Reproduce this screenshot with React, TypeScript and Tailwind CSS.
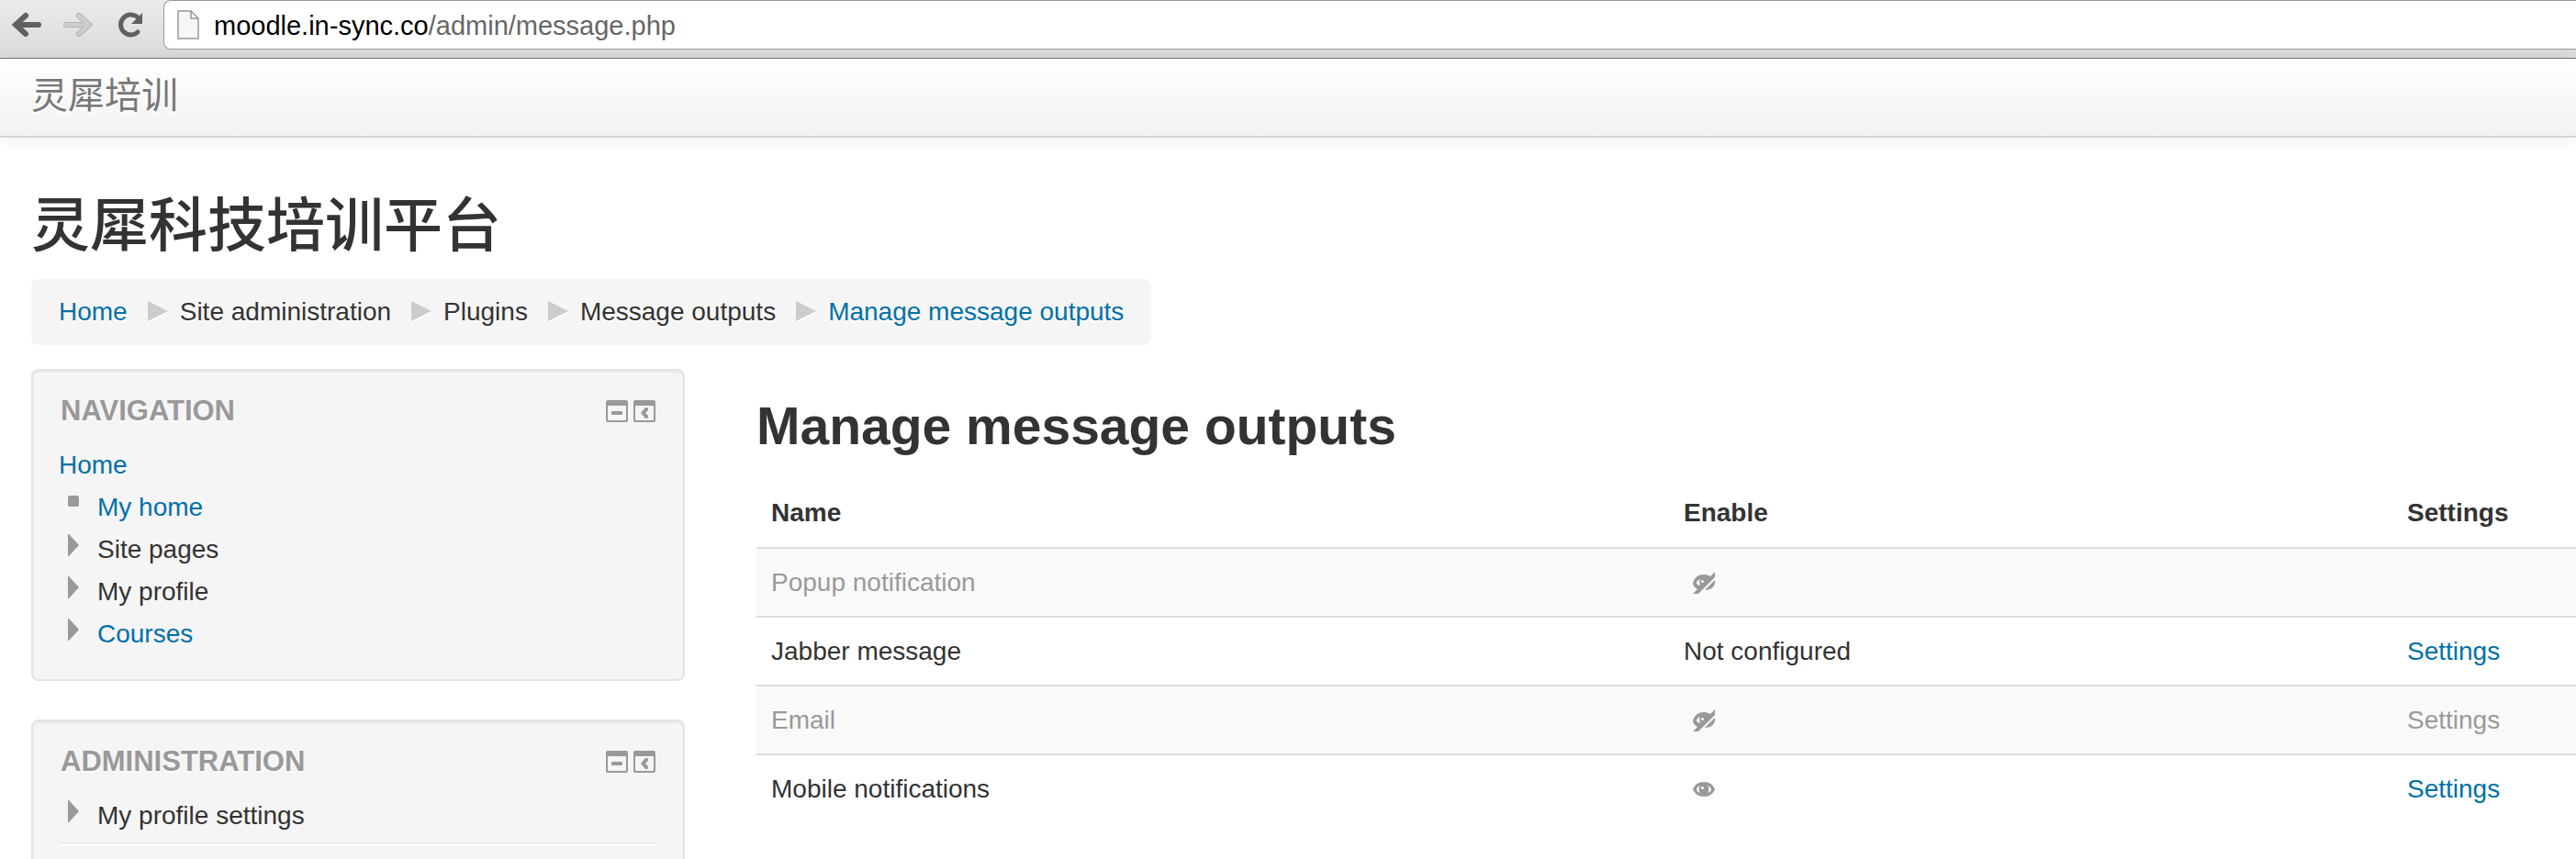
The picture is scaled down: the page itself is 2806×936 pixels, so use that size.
import { useState } from 'react';

type NavItem = { label: string; href?: string; leaf?: boolean };
type Output = { name: string; status: 'hidden' | 'visible' | 'unconfigured'; settings: boolean };

const CRUMBS: NavItem[] = [
  { label: 'Home', href: '#home' },
  { label: 'Site administration' },
  { label: 'Plugins' },
  { label: 'Message outputs' },
  { label: 'Manage message outputs', href: '#message' },
];

const NAV_ITEMS: NavItem[] = [
  { label: 'My home', href: '#my', leaf: true },
  { label: 'Site pages' },
  { label: 'My profile' },
  { label: 'Courses', href: '#courses' },
];

const OUTPUTS: Output[] = [
  { name: 'Popup notification', status: 'hidden', settings: false },
  { name: 'Jabber message', status: 'unconfigured', settings: true },
  { name: 'Email', status: 'hidden', settings: true },
  { name: 'Mobile notifications', status: 'visible', settings: true },
];

export default function App() {
  return (
    <div className="min-h-screen overflow-hidden bg-white font-['Liberation_Sans','Noto_Sans_CJK_SC',sans-serif] text-[28px] leading-[40px] text-[#333]">
      <BrowserBar />

      <header className="border-b-2 border-[#d4d4d4] bg-linear-to-b from-white to-[#f2f2f2] px-[34px] pt-5 pb-6 shadow-[0_2px_16px_rgba(0,0,0,0.08)]">
        <a href="#home" className="block text-[40px] leading-[40px] text-[#777] [text-shadow:0_2px_0_#fff]">
          灵犀培训
        </a>
      </header>

      <div className="px-[34px] pt-[56px]">
        <h1 className="text-[64px] leading-[80px] font-medium">灵犀科技培训平台</h1>

        <nav aria-label="Breadcrumb" className="mt-[18px] w-fit rounded-lg bg-[#f5f5f5] px-[30px] py-4">
          <ul className="flex">
            {CRUMBS.map((crumb, i) => (
              <li key={crumb.label} className="flex items-center [text-shadow:0_2px_0_#fff]">
                {i > 0 && <CrumbArrow />}
                <ItemLabel item={crumb} />
              </li>
            ))}
          </ul>
        </nav>

        <div className="mt-[26px] flex items-start gap-[78px]">
          <aside className="w-[712px] shrink-0 space-y-[42px]">
            <Block title="Navigation">
              <a href="#home" className="block leading-[46px] text-[#0070a8]">Home</a>
              <Tree items={NAV_ITEMS} />
            </Block>
            <Block title="Administration">
              <Tree items={[{ label: 'My profile settings' }]} />
              <hr className="mt-[6px] border-t-2 border-b-2 border-t-[#eee] border-b-white" />
            </Block>
          </aside>

          <main className="min-w-0 flex-1">
            <h2 className="mt-[22px] text-[57px] leading-[80px] font-bold">Manage message outputs</h2>
            <OutputTable />
          </main>
        </div>
      </div>
    </div>
  );
}

function BrowserBar() {
  const [url, setUrl] = useState('moodle.in-sync.co/admin/message.php');
  const slash = url.indexOf('/');
  const host = slash < 0 ? url : url.slice(0, slash);

  return (
    <div className="flex h-16 items-start border-b border-[#777] bg-linear-to-b from-[#ebebeb] to-[#dadada]">
      <div className="flex h-[54px] w-[178px] shrink-0 items-center gap-4 pl-[10px]">
        <button type="button" aria-label="Back">
          <svg className="block h-10 w-10" viewBox="0 0 40 40" fill="none" stroke="#606060" strokeWidth="6" strokeLinecap="round">
            <path d="M32 20H8M18 10 7 20l11 10" />
          </svg>
        </button>
        <button type="button" aria-label="Forward">
          <svg className="block h-10 w-10" viewBox="0 0 40 40" fill="none" strokeLinecap="round">
            <path d="M6 20h23M20 10l11 10-11 10" stroke="#b4b4b4" strokeWidth="6" />
            <path d="M6 20h23M20 10l11 10-11 10" stroke="#cdcdcd" strokeWidth="4" />
          </svg>
        </button>
        <button type="button" aria-label="Reload">
          <svg className="block h-10 w-10" viewBox="0 0 40 40">
            <path d="M28 28a11 11 0 1 1-1-17" fill="none" stroke="#606060" strokeWidth="5" strokeLinecap="round" />
            <path d="M33 7v12H21z" fill="#606060" />
          </svg>
        </button>
      </div>
      <div className="flex h-[54px] flex-1 items-center rounded-l-lg border border-r-0 border-[#999] bg-white pl-[14px]">
        <svg className="block h-8 w-6 shrink-0" viewBox="0 0 24 32" fill="#f6f6f8" stroke="#999" strokeWidth="1.5">
          <path d="M1 1h14l8 8v22H1zM15 1v8h8" />
        </svg>
        {/* host is darker than the path, so a coloured copy lies under the clear input text */}
        <div className="relative ml-4 flex-1 pt-[2px] text-[29px]">
          <div aria-hidden="true" className="text-[#666]">
            <span className="text-black">{host}</span>
            {url.slice(host.length)}
          </div>
          <input
            type="text"
            aria-label="Address"
            value={url}
            onChange={(e) => setUrl(e.target.value)}
            className="absolute inset-0 bg-transparent pt-[2px] text-transparent caret-black outline-none"
          />
        </div>
      </div>
    </div>
  );
}

function Block({ title, children }: { title: string; children: React.ReactNode }) {
  return (
    <section className="rounded-lg border-2 border-[#e3e3e3] bg-[#f5f5f5] px-7 pt-6 pb-[26px] shadow-[inset_0_2px_2px_rgba(0,0,0,0.05)]">
      <div className="mb-4 flex items-center justify-between px-[2px]">
        <h2 className="text-[31px] font-bold text-[#999] uppercase [text-shadow:0_2px_0_#fff]">{title}</h2>
        <div className="flex gap-[6px]">
          <button type="button" aria-label={`Hide ${title} block`}>
            <svg className="block h-6 w-6" viewBox="0 0 24 24" fill="#999">
              <BlockIconFrame />
              <rect x="6" y="12" width="12" height="4" rx="1" />
            </svg>
          </button>
          <button type="button" aria-label={`Dock ${title} block`}>
            <svg className="block h-6 w-6" viewBox="0 0 24 24" fill="#999">
              <BlockIconFrame />
              <path d="M13 8h2l1 1v2l-3 3 3 3v2l-1 1h-2l-5-6z" />
            </svg>
          </button>
        </div>
      </div>
      {children}
    </section>
  );
}

function BlockIconFrame() {
  return <path fillRule="evenodd" d="M2 0h20a2 2 0 0 1 2 2v20a2 2 0 0 1-2 2H2a2 2 0 0 1-2-2V2a2 2 0 0 1 2-2zM3 6a1 1 0 0 0-1 1v14a1 1 0 0 0 1 1h18a1 1 0 0 0 1-1V7a1 1 0 0 0-1-1z" />;
}

function Tree({ items }: { items: NavItem[] }) {
  return (
    <ul>
      {items.map((item) => (
        <li key={item.label} className="flex pl-[10px] leading-[46px]">
          <svg className="mt-[6px] mr-5 block h-6 w-3 shrink-0" viewBox="0 0 12 24" fill="#999">
            {item.leaf ? <rect y="4" width="12" height="12" rx="2" /> : <path d="M0 0h1l11 12L1 24H0z" />}
          </svg>
          <ItemLabel item={item} />
        </li>
      ))}
    </ul>
  );
}

function ItemLabel({ item }: { item: NavItem }) {
  if (!item.href) return <span>{item.label}</span>;
  return <a href={item.href} className="text-[#0070a8]">{item.label}</a>;
}

function CrumbArrow() {
  return (
    <svg className="mr-[13px] ml-[22px] block h-6 w-[22px]" viewBox="0 0 22 24">
      <path d="M0 3l22 10L0 24z" fill="#fff" />
      <path d="M0 0l22 11L0 22z" fill="#ccc" />
    </svg>
  );
}

function OutputTable() {
  return (
    <table className="mt-[18px] w-[2110px] table-fixed border-collapse text-left">
      <thead>
        <tr className="h-[75px] align-middle">
          <th className="w-[994px] px-4 font-bold">Name</th>
          <th className="w-[788px] px-4 font-bold">Enable</th>
          <th className="px-4 font-bold">Settings</th>
        </tr>
      </thead>
      <tbody>
        {OUTPUTS.map((output) => {
          const dim = output.status === 'hidden' ? 'text-[#999]' : '';
          return (
            <tr key={output.name} className="h-[75px] border-t-2 border-[#ddd] align-middle odd:bg-[#f9f9f9]">
              <td className={`px-4 ${dim}`}>{output.name}</td>
              <td className="px-4">
                {output.status === 'unconfigured' ? 'Not configured' : <EyeToggle visible={output.status === 'visible'} />}
              </td>
              <td className="px-4">
                {output.settings && <a href="#settings" className={dim || 'text-[#0070a8]'}>Settings</a>}
              </td>
            </tr>
          );
        })}
      </tbody>
    </table>
  );
}

function EyeToggle({ visible }: { visible: boolean }) {
  return (
    <button type="button" aria-label={visible ? 'Disable' : 'Enable'} className="ml-[10px] block">
      <svg className="block h-6 w-6" viewBox="0 0 24 24" fill="#999">
        {visible ? (
          <>
            <path d="M12 4c6 0 10 3 12 8-2 5-6 8-12 8S2 17 0 12c2-5 6-8 12-8z" />
            <path d="M8 8c-2 1-4 2-4 4s2 3 4 4c-2-3-2-5 0-8zM16 8c2 1 4 2 4 4s-2 3-4 4c2-3 2-5 0-8z" fill="#fff" />
            <circle cx="10.5" cy="10.5" r="1.5" fill="#fff" />
          </>
        ) : (
          <>
            <path d="M0 24l5-5c-3-2-5-4-5-7 2-6 6-9 12-9 3 0 5 1 7 2l5-5v6L6 24z" />
            <path d="M24 9c1 7-4 11-11 11z" />
            <path d="M8 8c-2 1-4 2-4 4 0 1 2 3 4 3-1-3-1-5 0-7z" fill="#f9f9f9" />
            <circle cx="10.5" cy="10.5" r="1.5" fill="#f9f9f9" />
          </>
        )}
      </svg>
    </button>
  );
}
